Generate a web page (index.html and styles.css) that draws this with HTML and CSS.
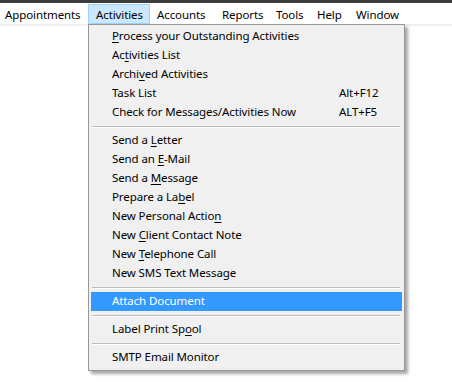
FILE: index.html
```html
<!DOCTYPE html>
<html>
<head>
<meta charset="utf-8">
<link rel="stylesheet" href="styles.css">
</head>
<body>
<div class="topstrip"></div>
<nav class="menubar">
  <div class="mb-item w-appt">Appointments</div>
  <div class="mb-item w-act active">Activities</div>
  <div class="mb-item w-acc">Accounts</div>
  <div class="mb-item w-rep">Reports</div>
  <div class="mb-item w-tools">Tools</div>
  <div class="mb-item w-help">Help</div>
  <div class="mb-item w-win">Window</div>
</nav>
<div class="band"></div>
<div class="dropdown">
  <div class="item"><span><u>P</u>rocess your Outstanding Activities</span><span></span></div>
  <div class="item"><span>Ac<u>t</u>ivities List</span><span></span></div>
  <div class="item"><span>Archi<u>v</u>ed Activities</span><span></span></div>
  <div class="item"><span>Task List</span><span>Alt+F12</span></div>
  <div class="item"><span>Check for Messages/Activities Now</span><span>ALT+F5</span></div>
  <div class="sep"></div>
  <div class="item"><span>Send a <u>L</u>etter</span><span></span></div>
  <div class="item"><span>Send an <u>E</u>-Mail</span><span></span></div>
  <div class="item"><span>Send a <u>M</u>essage</span><span></span></div>
  <div class="item"><span>Prepare a La<u>b</u>el</span><span></span></div>
  <div class="item"><span>New Personal Actio<u>n</u></span><span></span></div>
  <div class="item"><span>New <u>C</u>lient Contact Note</span><span></span></div>
  <div class="item"><span>New <u>T</u>elephone Call</span><span></span></div>
  <div class="item"><span>New SMS Text Message</span><span></span></div>
  <div class="sep"></div>
  <div class="item selected"><span>Attach Document</span><span></span></div>
  <div class="sep"></div>
  <div class="item"><span>Label Print Sp<u>o</u>ol</span><span></span></div>
  <div class="sep"></div>
  <div class="item"><span>SMTP Email Monitor</span><span></span></div>
</div>
</body>
</html>
```
FILE: styles.css
```css
html, body {
  margin: 0;
  padding: 0;
  background: #ffffff;
}
body {
  font-family: "Noto Sans", "Open Sans", sans-serif;
  font-size: 11.5px;
  letter-spacing: -0.1px;
  color: #000;
  position: relative;
  width: 452px;
  height: 385px;
  overflow: hidden;
}
.topstrip {
  height: 3px;
  background: #3c3c3c;
}
.menubar {
  display: flex;
  height: 21px;
  background: #ffffff;
}
.mb-item {
  box-sizing: border-box;
  height: 20px;
  margin-top: 1px;
  line-height: 19px;
  border: 1px solid transparent;
  white-space: nowrap;
}
.mb-item.active {
  background: #cce8ff;
  border-color: #99d1ff;
}
.w-appt { width: 88px; padding-left: 5px; border-left: 0; }
.w-act { width: 62px; padding-left: 7px; }
.w-acc { width: 64px; padding-left: 6px; }
.w-rep { width: 54px; padding-left: 7px; }
.w-tools { width: 42px; padding-left: 7px; }
.w-help { width: 39px; padding-left: 6px; }
.w-win { width: 62px; padding-left: 6px; }
.band {
  height: 2px;
  background: #f0f0f0;
}
.dropdown {
  position: absolute;
  left: 88px;
  top: 24px;
  width: 317px;
  height: 347px;
  box-sizing: border-box;
  background: #f0f0f0;
  border: 1px solid #979797;
  box-shadow: 3px 3px 3px rgba(0, 0, 0, 0.35);
  padding: 2px 2px 3px 2px;
}
.item {
  display: grid;
  grid-template-columns: 227px auto;
  height: 19px;
  line-height: 18px;
  padding-left: 21px;
  white-space: nowrap;
}
.item u {
  text-underline-offset: 2px;
}
.item.selected {
  background: #3399ff;
  color: #ffffff;
}
.sep {
  height: 1px;
  margin: 4px 2px 3px 1px;
  background: #bdbdbd;
  border-bottom: 1px solid #ffffff;
}
```
